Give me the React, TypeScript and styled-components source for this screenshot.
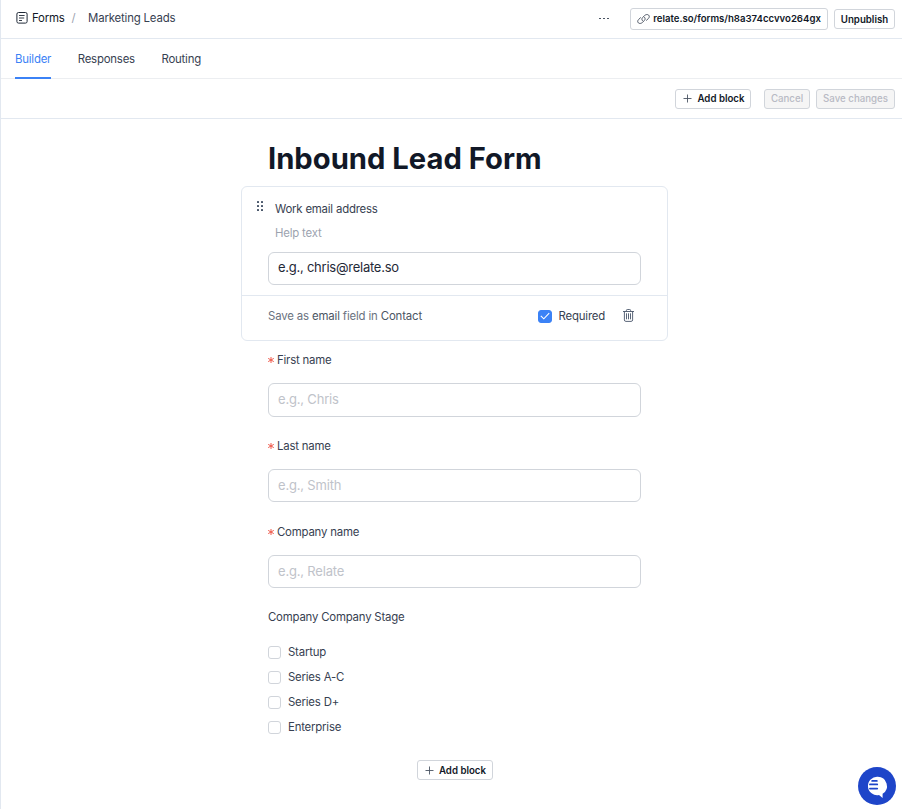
import React from "react";
import styled, { createGlobalStyle } from "styled-components";

const GlobalStyle = createGlobalStyle`
  * { box-sizing: border-box; }
  html, body { margin: 0; background: #fff; }
  body, button, input { font-family: Inter, "Liberation Sans", sans-serif; }
  button { cursor: pointer; }
`;

const Page = styled.div`
  height: 809px;
  border-left: 1px solid #e2e8f0;
  color: #374151;
  font-size: 11.4px;
  letter-spacing: -0.2px;
  line-height: 16px;
  overflow: hidden;
`;

const Header = styled.header`
  display: flex;
  align-items: center;
  height: 39px;
  padding: 0 7px 2px 15px;
  border-bottom: 1px solid #e2e8f0;
`;

const Breadcrumb = styled.div`
  display: flex;
  align-items: center;
  flex: 1;
  svg { margin-right: 4px; }
`;

const Crumb = styled.span<{ $strong?: boolean }>`
  color: ${(p) => (p.$strong ? "#111827" : "#374151")};
  letter-spacing: ${(p) => (p.$strong ? "-0.2px" : "-0.17px")};
`;

const Slash = styled.span`
  width: 23.5px;
  padding-left: 7px;
  color: #9ca3af;
`;

const More = styled.div`
  display: flex;
  gap: 2px;
  margin-right: 21px;
  i { width: 2px; height: 1px; background: #4b5563; }
`;

const Button = styled.button<{ $width: number; $height?: number }>`
  display: flex;
  align-items: center;
  justify-content: center;
  width: ${(p) => p.$width}px;
  height: ${(p) => p.$height ?? 20}px;
  padding: 1px 0 0;
  border: 1px solid #d1d5db;
  border-radius: 3px;
  background: #fff;
  color: #111827;
  font-size: 9.7px;
  font-weight: 600;
  line-height: 14px;
  white-space: nowrap;
  &:disabled { background: #f5f5f5; color: #b8bac4; font-weight: 500; }
`;

const LinkButton = styled(Button)`
  gap: 3px;
  margin-top: 2px;
  padding-top: 0;
  font-size: 9.6px;
`;

const PublishButton = styled(Button)`
  margin: 2px 0 0 6px;
`;

const Tabs = styled.nav`
  display: flex;
  gap: 26.5px;
  height: 40px;
  padding-left: 14px;
  border-bottom: 1px solid #eceef1;
`;

const Tab = styled.a<{ $active?: boolean }>`
  height: 40px;
  padding-top: 12px;
  color: ${(p) => (p.$active ? "#3b82f6" : "#374151")};
  border-bottom: 2px solid ${(p) => (p.$active ? "#3b82f6" : "transparent")};
`;

const Toolbar = styled.div`
  display: flex;
  align-items: center;
  justify-content: flex-end;
  gap: 6px;
  height: 40px;
  padding: 0 7px 0 0;
  border-bottom: 1px solid #e2e8f0;
`;

const AddButton = styled(Button)`
  gap: 5px;
  padding-left: 2px;
  svg { margin-top: -1px; }
`;

const ToolbarAddButton = styled(AddButton)`
  margin-right: 7px;
`;

const Form = styled.main`
  width: 427px;
  margin-left: 240px;
  padding-top: 20px;
`;

const Title = styled.h1`
  margin: 0 0 7px 27px;
  color: #111827;
  font-size: 29.2px;
  font-weight: 700;
  letter-spacing: 0;
  line-height: 40px;
  white-space: nowrap;
`;

const Card = styled.section`
  height: 155px;
  border: 1px solid #e2e8f0;
  border-radius: 6px;
`;

const CardBody = styled.div`
  height: 109px;
  padding: 14px 26px 0;
  border-bottom: 1px solid #e2e8f0;
`;

const CardHeading = styled.div`
  display: grid;
  grid-template-columns: 19px 1fr;
  margin-left: -12px;
  row-gap: 8px;
  margin-bottom: 11px;
`;

const Help = styled.span`
  grid-column: 2;
  color: #9ca3af;
`;

const Input = styled.input<{ $height?: number }>`
  display: block;
  width: 373px;
  height: ${(p) => p.$height ?? 33}px;
  padding: 0 9px 2px;
  border: 1px solid #d1d5db;
  border-radius: 6px;
  outline: none;
  background: #fff;
  color: #1f2937;
  font-size: 13px;
  letter-spacing: -0.25px;
  &::placeholder { color: #bfc3ca; opacity: 1; letter-spacing: -0.18px; }
`;

const EmailInput = styled(Input)`
  padding-bottom: 3px;
`;

const CardFooter = styled.div`
  display: flex;
  align-items: center;
  height: 44px;
  padding: 0 33px 4px 26px;
`;

const SaveAs = styled.span`
  flex: 1;
  color: #6b7280;
  letter-spacing: -0.15px;
  b { color: #4b5563; font-weight: 400; }
`;

const CheckLabel = styled.label`
  display: flex;
  align-items: center;
  gap: 7px;
`;

const Box = styled.span<{ $checked?: boolean }>`
  display: flex;
  align-items: center;
  justify-content: center;
  width: ${(p) => (p.$checked ? 14 : 13)}px;
  height: 13px;
  border: 1px solid ${(p) => (p.$checked ? "#3b82f6" : "#d1d5db")};
  border-radius: 3px;
  background: ${(p) => (p.$checked ? "#3b82f6" : "#fff")};
`;

const Delete = styled.span`
  display: flex;
  margin: -1px 0 0 18px;
`;

const Fields = styled.div`
  padding: 11px 0 0 27px;
`;

const Field = styled.div`
  height: 86px;
`;

const FieldLabel = styled.label`
  display: flex;
  gap: 3px;
  margin-bottom: 15px;
`;

const Star = styled.span`
  display: flex;
  align-items: center;
  width: 6px;
`;

const GroupLabel = styled.div`
  margin-top: -1px;
`;

const Options = styled.div`
  display: grid;
  gap: 9px;
  margin-top: 19px;
`;

const BottomBar = styled.div`
  display: flex;
  justify-content: center;
  padding-top: 25px;
`;

const Chat = styled.button`
  position: fixed;
  right: 6px;
  bottom: 4px;
  width: 38px;
  height: 38px;
  padding: 0;
  border: 0;
  border-radius: 50%;
  background: #1e45c9;
  svg { display: block; }
`;

const FormIcon = () => (
  <svg width="12" height="12" viewBox="0 0 12 12" fill="none" stroke="#1f2937">
    <rect x="0.9" y="0.5" width="10.2" height="10.6" rx="1.6" />
    <path d="M3 3.5h5.6M3 6h5.2M3 8.5h3" strokeWidth=".9" />
  </svg>
);

const LinkIcon = () => (
  <svg width="13" height="10" viewBox="0 0 13 10" fill="none" stroke="#374151" strokeWidth="0.85" strokeLinecap="round">
    <path d="M5.6 6.8C4.6 6 4.6 4.6 5.6 3.5L7.7 1.5C8.8.4 10.6.2 11.6 1.1s.9 2.3-.2 3.4L9.5 6.3" />
    <path d="M7.4 3.2C8.4 4 8.4 5.4 7.4 6.5L5.3 8.5C4.2 9.6 2.4 9.8 1.4 8.9s-.9-2.3.2-3.4L3.5 3.7" />
  </svg>
);

const PlusIcon = () => (
  <svg width="9" height="9" viewBox="0 0 9 9" stroke="#4b5563" strokeWidth=".9">
    <path d="M4.5 .5v8M.5 4.5h8" />
  </svg>
);

const GripIcon = () => (
  <svg width="8" height="11" viewBox="0 0 8 11" fill="#475569">
    {[0, 4, 8].map((y) => (
      <React.Fragment key={y}>
        <rect x="1" y={y} width="2" height="2" rx=".5" />
        <rect x="5" y={y} width="2" height="2" rx=".5" />
      </React.Fragment>
    ))}
  </svg>
);

const TrashIcon = () => (
  <svg width="11" height="13" viewBox="0 0 11 13" fill="none" stroke="#475569" strokeWidth=".9">
    <path d="M0 2.5h11M3.4 2.3V1.4Q3.4.5 4.3.5h2.4q.9 0 .9.9v.9M1.4 2.5v8.4q0 1.5 1.5 1.5h5.2q1.5 0 1.5-1.5V2.5" />
    <path d="M3.5 4.3v6M5.5 4.3v6M7.5 4.3v6" />
  </svg>
);

const StarIcon = () => (
  <svg width="6" height="6" viewBox="0 0 6 6" stroke="#ef5a4c" strokeWidth="1">
    <path d="M3 0v6M.2 1.4l5.6 3.2M5.8 1.4L.2 4.6" />
  </svg>
);

const CheckIcon = () => (
  <svg width="10" height="8" viewBox="0 0 10 8" fill="none" stroke="#fff" strokeWidth="1.1">
    <path d="M.8 3.8l3 3L9.2 1.2" />
  </svg>
);

const ChatIcon = () => (
  <svg width="38" height="38" viewBox="0 0 38 38">
    <path d="M19.7 9.8a9.2 9.2 0 0 1 4.9 17V31l-3.6-3A9.2 9.2 0 1 1 19.7 9.8Z" fill="#fff" />
    <path d="M14.2 13.9h4.6M12 17.4h7.2M12 21.6h7.2" stroke="#1e45c9" strokeWidth="1.9" strokeLinecap="round" />
  </svg>
);

const fields = [
  { label: "First name", hint: "e.g., Chris", height: 34 },
  { label: "Last name", hint: "e.g., Smith", height: 33 },
  { label: "Company name", hint: "e.g., Relate", height: 33 },
];
const stages = ["Startup", "Series A-C", "Series D+", "Enterprise"];

export default function App() {
  return (
    <Page>
      <GlobalStyle />
      <Header>
        <Breadcrumb>
          <FormIcon />
          <Crumb $strong>Forms</Crumb>
          <Slash>/</Slash>
          <Crumb>Marketing Leads</Crumb>
        </Breadcrumb>
        <More><i /><i /><i /></More>
        <LinkButton $width={198} $height={22}>
          <LinkIcon />relate.so/forms/h8a374ccvvo264gx
        </LinkButton>
        <PublishButton $width={61}>Unpublish</PublishButton>
      </Header>
      <Tabs>
        <Tab $active>Builder</Tab>
        <Tab>Responses</Tab>
        <Tab>Routing</Tab>
      </Tabs>
      <Toolbar>
        <ToolbarAddButton $width={76}><PlusIcon />Add block</ToolbarAddButton>
        <Button $width={46} disabled>Cancel</Button>
        <Button $width={79} disabled>Save changes</Button>
      </Toolbar>
      <Form>
        <Title>Inbound Lead Form</Title>
        <Card>
          <CardBody>
            <CardHeading>
              <GripIcon />
              <span>Work email address</span>
              <Help>Help text</Help>
            </CardHeading>
            <EmailInput defaultValue="e.g., chris@relate.so" />
          </CardBody>
          <CardFooter>
            <SaveAs>Save as <b>email</b> field in <b>Contact</b></SaveAs>
            <CheckLabel><Box $checked><CheckIcon /></Box>Required</CheckLabel>
            <Delete><TrashIcon /></Delete>
          </CardFooter>
        </Card>
        <Fields>
          {fields.map((f) => (
            <Field key={f.label}>
              <FieldLabel><Star><StarIcon /></Star>{f.label}</FieldLabel>
              <Input placeholder={f.hint} $height={f.height} />
            </Field>
          ))}
          <GroupLabel>Company Company Stage</GroupLabel>
          <Options>
            {stages.map((s) => (
              <CheckLabel key={s}><Box />{s}</CheckLabel>
            ))}
          </Options>
        </Fields>
        <BottomBar>
          <AddButton $width={76}><PlusIcon />Add block</AddButton>
        </BottomBar>
      </Form>
      <Chat aria-label="Chat"><ChatIcon /></Chat>
    </Page>
  );
}
